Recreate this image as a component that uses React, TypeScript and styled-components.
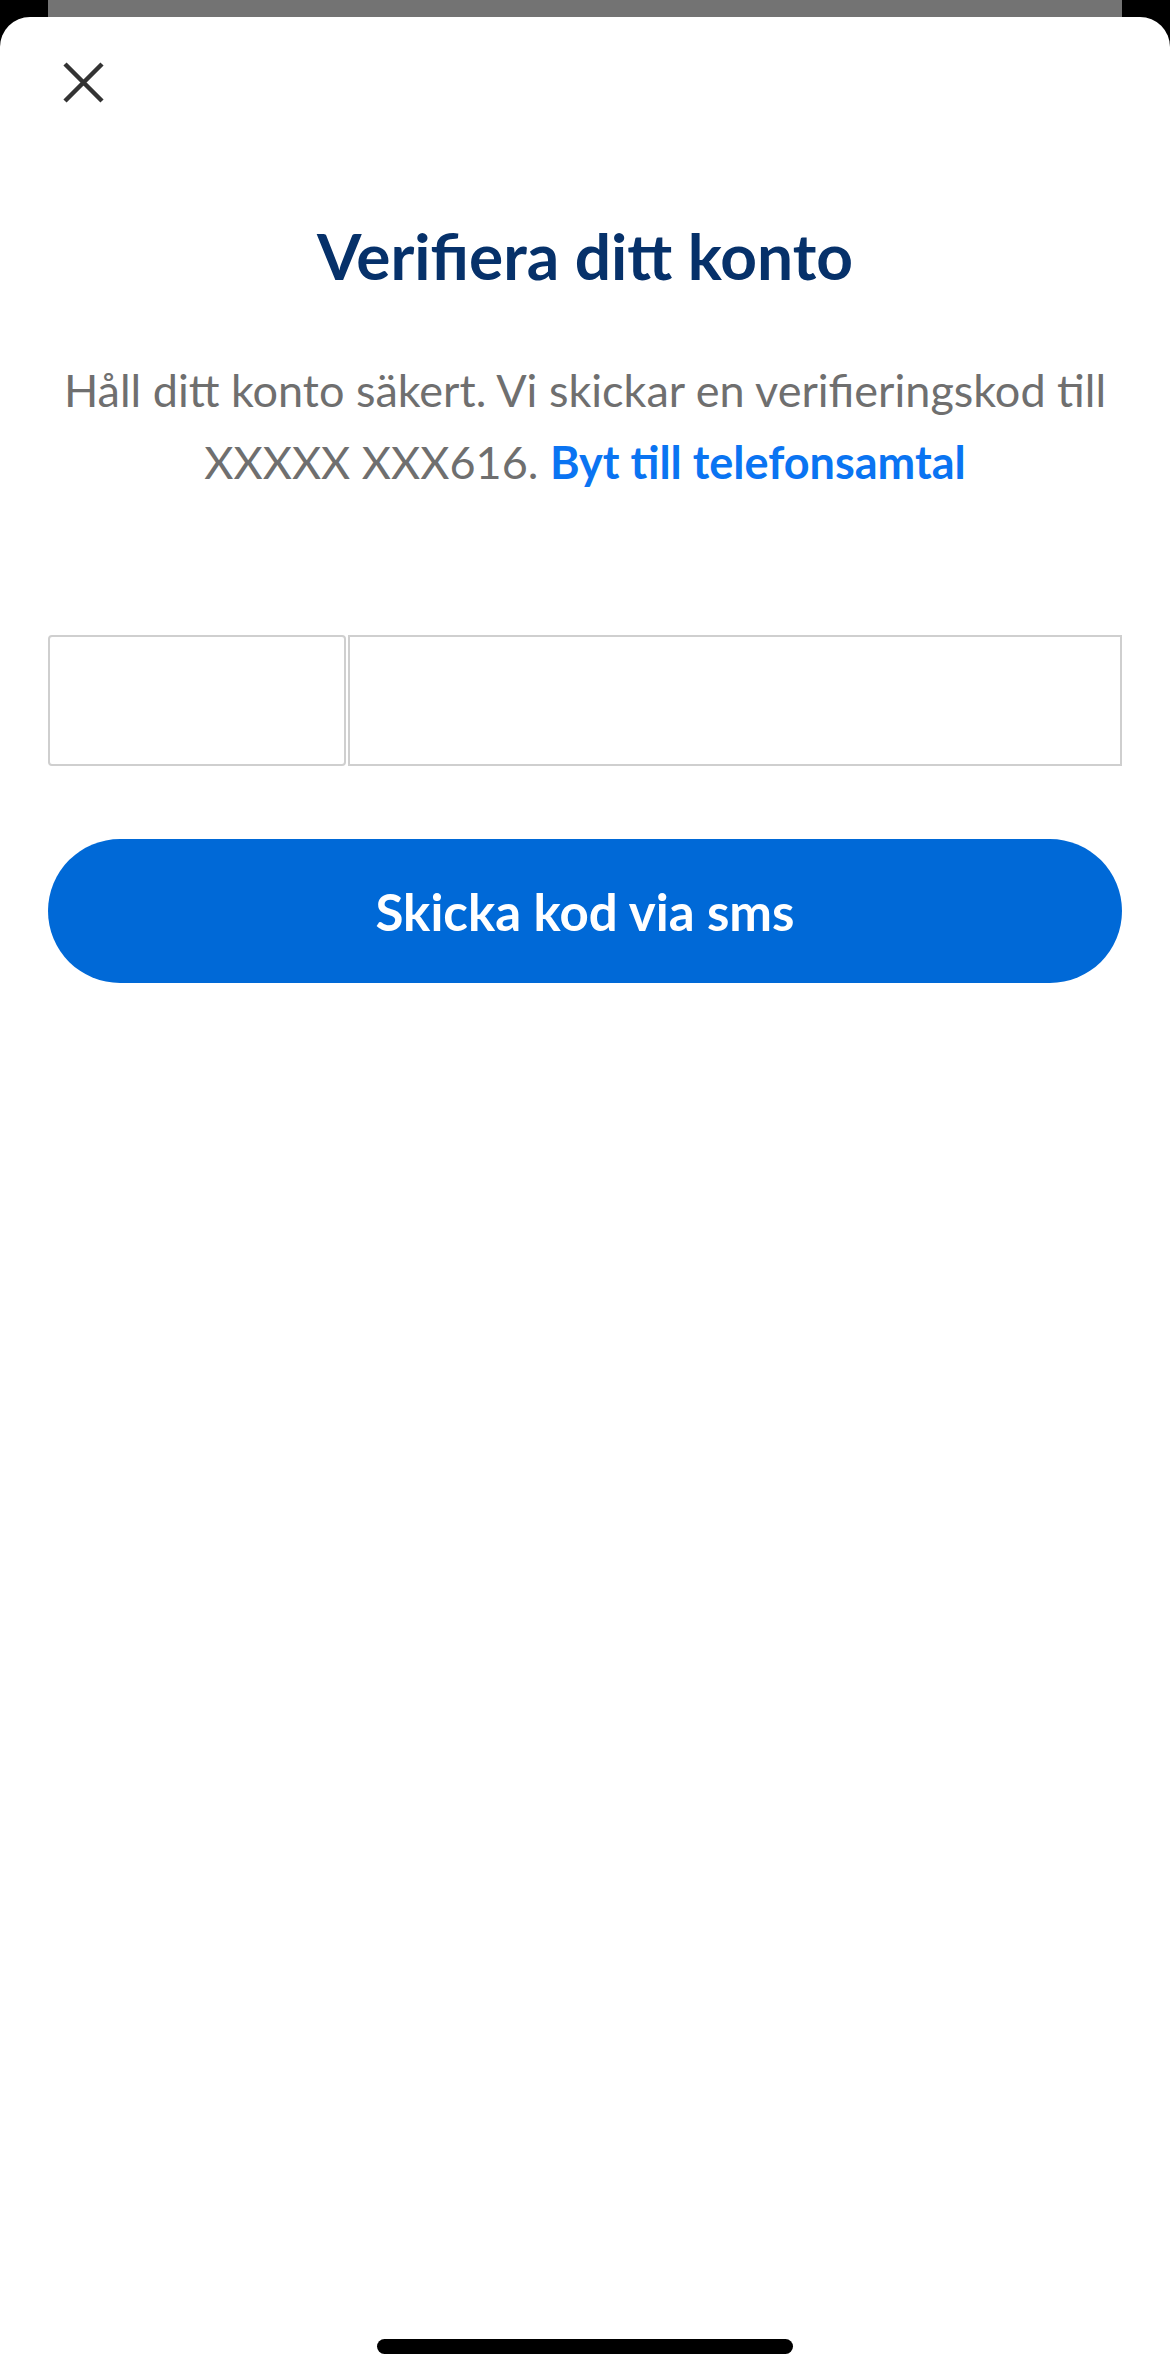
import React from 'react';
import styled, { createGlobalStyle } from 'styled-components';

const GlobalStyle = createGlobalStyle`
    html, body {
        margin: 0;
        padding: 0;
        background: #000000;
    }
    body {
        font-family: Lato, 'Noto Sans', 'Liberation Sans', sans-serif;
    }
`;

const Screen = styled.div`
    display: flex;
    flex-direction: column;
    width: 1170px;
    height: 2378px;
    overflow: hidden;
    background: #000000;
`;

const CardBehind = styled.div`
    height: 44px;
    margin: 0 48px;
    background: #737373;
`;

const Sheet = styled.div`
    position: relative;
    z-index: 1;
    flex: 1;
    display: flex;
    flex-direction: column;
    margin-top: -27px;
    padding: 0 48px;
    background: #ffffff;
    border-radius: 30px 30px 0 0;
`;

const Header = styled.div`
    display: flex;
    align-items: center;
    height: 41px;
    padding-top: 45px;
    padding-left: 15px;
`;

const CloseButton = styled.button`
    display: flex;
    align-items: center;
    justify-content: center;
    width: 41px;
    height: 41px;
    padding: 0;
    border: none;
    background: none;
    cursor: pointer;
`;

const Title = styled.h1`
    margin: 117px 0 0;
    text-align: center;
    font-size: 64px;
    line-height: 72px;
    font-weight: 700;
    color: #06316a;
`;

const Description = styled.div`
    margin: 62px -20px 0;
    text-align: center;
    font-size: 45px;
    line-height: 72px;
    font-weight: 400;
    color: #6f6f6f;
`;

const Line = styled.p`
    margin: 0;
`;

const Link = styled.a`
    color: #0a74f2;
    font-weight: 700;
    text-decoration: none;
`;

const CodeRow = styled.div`
    display: flex;
    gap: 2px;
    height: 131px;
    margin-top: 137px;
`;

const Field = styled.input<{ $narrow?: boolean }>`
    box-sizing: border-box;
    flex: ${p => (p.$narrow ? '0 0 298px' : '1')};
    min-width: 0;
    height: 100%;
    padding: 0 24px;
    border: 2px solid #cfcfcf;
    border-radius: ${p => (p.$narrow ? '4px' : '0')};
    background: #ffffff;
    font-family: inherit;
    font-size: 40px;
    color: #333333;
    outline: none;
`;

const SubmitButton = styled.button`
    height: 144px;
    margin-top: 73px;
    border: none;
    border-radius: 72px;
    background: #0069d7;
    color: #ffffff;
    font-family: inherit;
    font-size: 51px;
    font-weight: 700;
    cursor: pointer;
`;

const HomeIndicator = styled.div`
    align-self: center;
    width: 416px;
    height: 15px;
    margin: auto 0 24px;
    border-radius: 8px;
    background: #000000;
`;

const CloseIcon = () => (
    <svg width="41" height="41" viewBox="0 0 41 41" fill="none">
        <path d="M2 2L39 39M39 2L2 39" stroke="#333333" strokeWidth="4.5" />
    </svg>
);

const App = () => {
    return (
        <>
            <GlobalStyle />
            <Screen>
                <CardBehind />
                <Sheet>
                    <Header>
                        <CloseButton aria-label="Stäng">
                            <CloseIcon />
                        </CloseButton>
                    </Header>
                    <Title>Verifiera ditt konto</Title>
                    <Description>
                        <Line>Håll ditt konto säkert. Vi skickar en verifieringskod till</Line>
                        <Line>
                            XXXXX XXX616. <Link href="#">Byt till telefonsamtal</Link>
                        </Line>
                    </Description>
                    <CodeRow>
                        <Field $narrow aria-label="Landskod" />
                        <Field aria-label="Telefonnummer" />
                    </CodeRow>
                    <SubmitButton type="button">Skicka kod via sms</SubmitButton>
                    <HomeIndicator />
                </Sheet>
            </Screen>
        </>
    );
};

export default App;
